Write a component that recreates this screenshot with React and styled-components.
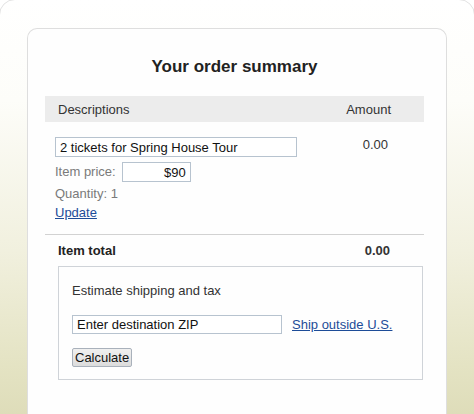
import React from "react";
import styled, { createGlobalStyle } from "styled-components";

const GlobalStyle = createGlobalStyle`
  html, body {
    margin: 0;
    padding: 0;
    height: 100%;
    overflow: hidden;
  }
  body {
    font-family: "Liberation Sans", Arial, Helvetica, sans-serif;
    font-size: 13px;
    color: #222;
    background: #fff;
  }
`;

const Frame = styled.div`
  margin: -1px;
  min-height: 420px;
  border: 1px solid #e2e2e2;
  border-radius: 16px;
  padding: 28px 27px 0;
  background: linear-gradient(
    180deg,
    #ffffff 0%,
    #fdfdf9 22%,
    #f1f0de 55%,
    #e4e3c3 80%,
    #d9d7b1 100%
  );
`;

const Card = styled.div`
  background: #fefefe;
  border: 1px solid #dedede;
  border-bottom: none;
  border-radius: 10px 10px 0 0;
  padding: 28px 22px 40px 17px;
  min-height: 360px;
`;

const Title = styled.h1`
  margin: 0 0 19px;
  text-align: center;
  font-size: 17px;
  line-height: 20px;
  font-weight: bold;
  color: #222;
`;

const Row = styled.div`
  display: grid;
  grid-template-columns: minmax(0, 1fr) 80px;
  align-items: ${(p) => (p.$top ? "start" : "center")};
`;

const HeadRow = styled(Row)`
  height: 26px;
  background: #ececec;
  color: #333;
  padding: 0 33px 0 13px;
`;

const Amount = styled.div`
  text-align: right;
  font-weight: ${(p) => (p.$bold ? "bold" : "normal")};
  color: #333;
`;

const ItemBlock = styled(Row)`
  padding: 15px 36px 13px 10px;
  border-bottom: 1px solid #d2d2d2;
`;

const ItemFields = styled.div`
  display: flex;
  flex-direction: column;
  align-items: flex-start;
`;

const TextBox = styled.input`
  box-sizing: border-box;
  width: ${(p) => p.$w}px;
  height: ${(p) => p.$h || 20}px;
  border: 1px solid #b7c3cf;
  border-radius: 0;
  padding: 0 4px;
  font-family: inherit;
  font-size: 13px;
  color: #111;
  background: #fff;
  text-align: ${(p) => (p.$right ? "right" : "left")};
  outline: none;
`;

const FieldLine = styled.div`
  display: flex;
  align-items: center;
  gap: 6px;
  color: #7a7a7a;
  margin-top: ${(p) => p.$mt || 0}px;
  line-height: 16px;
`;

const Link = styled.a`
  color: #1d4c98;
  text-decoration: underline;
  cursor: pointer;
  line-height: 16px;
  margin-top: ${(p) => p.$mt || 0}px;
`;

const TotalRow = styled(Row)`
  height: 31px;
  padding: 0 34px 0 13px;
  font-weight: bold;
  color: #222;
`;

const EstimateBox = styled.div`
  margin: 0 1px 0 13px;
  border: 1px solid #cfd3d8;
  padding: 16px 13px 12px;
  display: flex;
  flex-direction: column;
  align-items: flex-start;
`;

const BoxLabel = styled.div`
  color: #333;
  line-height: 16px;
  margin-bottom: 16px;
`;

const ZipLine = styled.div`
  display: flex;
  align-items: center;
  gap: 10px;
  margin-bottom: 14px;
`;

const Button = styled.button`
  height: 19px;
  padding: 0 2px;
  border: 1px solid #a9b1bb;
  border-radius: 2px;
  background: linear-gradient(#f0f0f0, #dcdcdc);
  font-family: inherit;
  font-size: 13px;
  color: #111;
  line-height: 17px;
`;

export default function App() {
  return (
    <>
      <GlobalStyle />
      <Frame>
        <Card>
          <Title>Your order summary</Title>
          <HeadRow>
            <div>Descriptions</div>
            <Amount>Amount</Amount>
          </HeadRow>
          <ItemBlock $top>
            <ItemFields>
              <TextBox $w={242} defaultValue="2 tickets for Spring House Tour" />
              <FieldLine $mt={5}>
                Item price:
                <TextBox $w={69} $right defaultValue="$90" />
              </FieldLine>
              <FieldLine $mt={4}>Quantity: 1</FieldLine>
              <Link $mt={3}>Update</Link>
            </ItemFields>
            <Amount>0.00</Amount>
          </ItemBlock>
          <TotalRow>
            <div>Item total</div>
            <Amount $bold>0.00</Amount>
          </TotalRow>
          <EstimateBox>
            <BoxLabel>Estimate shipping and tax</BoxLabel>
            <ZipLine>
              <TextBox $w={210} $h={19} defaultValue="Enter destination ZIP" />
              <Link>Ship outside U.S.</Link>
            </ZipLine>
            <Button>Calculate</Button>
          </EstimateBox>
        </Card>
      </Frame>
    </>
  );
}
